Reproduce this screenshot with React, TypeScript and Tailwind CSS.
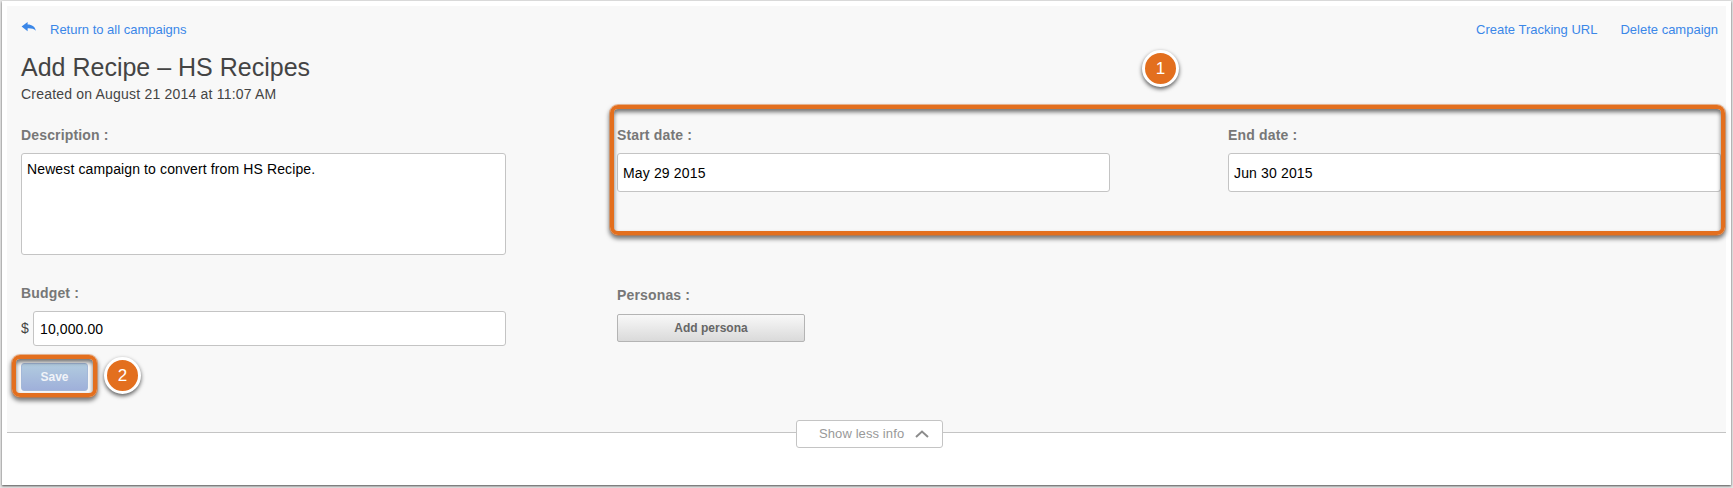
import type { ReactNode } from "react";

function Label({ children }: { children: ReactNode }) {
  return (
    <div className="text-[14px] leading-[18px] font-bold tracking-[0.16px] text-[#777]">
      {children}
    </div>
  );
}

function Step({ n, className }: { n: number; className: string }) {
  return (
    <div
      className={`absolute flex h-[37px] w-[37px] items-center justify-center rounded-full border-[3px] border-white bg-[#e36f1e] text-[17px] text-white shadow-[0_2px_4px_rgba(0,0,0,0.65)] ${className}`}
    >
      {n}
    </div>
  );
}

function Highlight({ className }: { className: string }) {
  return (
    <div
      className={`pointer-events-none absolute rounded-[8px] border-4 border-[#e36f1e] shadow-[0_0_0_1px_rgba(227,111,30,0.45),0_3px_4px_1px_rgba(0,0,0,0.5),inset_0_3px_4px_rgba(0,0,0,0.55)] ${className}`}
    />
  );
}

function DateField({ label, value }: { label: string; value: string }) {
  return (
    <div className="w-[493px]">
      <Label>{label}</Label>
      <div className="mt-[9px] flex h-[39px] items-center rounded-[3px] border border-[#c4c4c4] bg-white px-[5px] pt-px text-[14px] tracking-[0.15px] text-black">
        {value}
      </div>
    </div>
  );
}

export default function App() {
  return (
    <div className="h-[488px] bg-[#e4e4e4] pt-px pr-[2px] pl-[2px] font-['Liberation_Sans',Arial,sans-serif]">
      <div className="relative h-[484px] bg-white px-[5px] pt-[5px] shadow-[0_1px_2px_rgba(0,0,0,0.65)]">
        <div className="h-[427px] border-b border-[#c4c4c4] bg-[#f8f8f8] pr-[4px] pl-[14px] text-[#444]">
          <div className="flex h-[42px] items-center justify-between pt-[6px] pr-[4px] text-[13px] text-[#3b87e8]">
            <a className="flex items-center">
              <svg width="15" height="10" viewBox="0 0 15 10" className="mr-[14px] mb-[6px]" fill="currentColor">
                <path d="M.6 4.6 6.6 0v2.4C11 2.4 14.4 4.7 14.8 8.8 12.8 7 10.2 6.2 6.6 6.4v2.8Z" />
              </svg>
              Return to all campaigns
            </a>
            <div className="flex gap-[23px]">
              <a>Create Tracking URL</a>
              <a>Delete campaign</a>
            </div>
          </div>
          <h1 className="mt-[5px] text-[25px] leading-[28px]">Add Recipe – HS Recipes</h1>
          <p className="mt-[4px] text-[14px] leading-[18px] tracking-[0.2px]">Created on August 21 2014 at 11:07 AM</p>

          <div className="mt-[23px] flex">
            <div className="w-[596px]">
              <Label>Description :</Label>
              <div className="mt-[9px] h-[102px] w-[485px] rounded-[3px] border border-[#c4c4c4] bg-white px-[5px] pt-[6px] text-[14px] leading-[18px] tracking-[0.12px] text-black">
                Newest campaign to convert from HS Recipe.
              </div>
            </div>
            <div className="flex gap-[118px]">
              <DateField label="Start date :" value="May 29 2015" />
              <DateField label="End date :" value="Jun 30 2015" />
            </div>
          </div>

          <div className="mt-[29px] flex">
            <div className="w-[596px]">
              <Label>Budget :</Label>
              <div className="mt-[9px] flex w-[485px] items-center text-[14px]">
                <span className="w-[12px]">$</span>
                <div className="flex h-[35px] flex-1 items-center rounded-[3px] border border-[#c4c4c4] bg-white px-[6px] pt-px tracking-[0.1px] text-black">
                  10,000.00
                </div>
              </div>
              <button className="mt-[17px] block h-[28px] w-[67px] rounded-[3px] border border-[#a3b8d8] bg-linear-to-b from-[#b1cbdf] to-[#9fb0da] text-[12px] font-bold text-[#f0f3f8]">
                Save
              </button>
            </div>
            <div className="pt-[2px]">
              <Label>Personas :</Label>
              <button className="mt-[10px] block h-[28px] w-[188px] rounded-[2px] border border-[#b4b4b4] bg-linear-to-b from-[#f8f8f8] to-[#dadada] text-[12px] font-bold text-[#666]">
                Add persona
              </button>
            </div>
          </div>
        </div>

        <button className="absolute top-[419px] left-[794px] flex h-[28px] w-[147px] items-center rounded-[3px] border border-[#c4c4c4] bg-white pb-px pl-[22px] text-[13px] tracking-[0.1px] text-[#999]">
          Show less info
          <svg width="14" height="8" viewBox="0 0 14 8" className="mt-px ml-[11px]" fill="none" stroke="#8c8c8c" strokeWidth="2">
            <path d="M1 7 7 1.6 13 7" />
          </svg>
        </button>

        <Highlight className="top-[104px] left-[608px] h-[130px] w-[1115px]" />
        <Step n={1} className="top-[49px] left-[1140px]" />
        <Highlight className="top-[354px] left-[10px] h-[42px] w-[85px]" />
        <Step n={2} className="top-[356px] left-[102px]" />
      </div>
    </div>
  );
}
